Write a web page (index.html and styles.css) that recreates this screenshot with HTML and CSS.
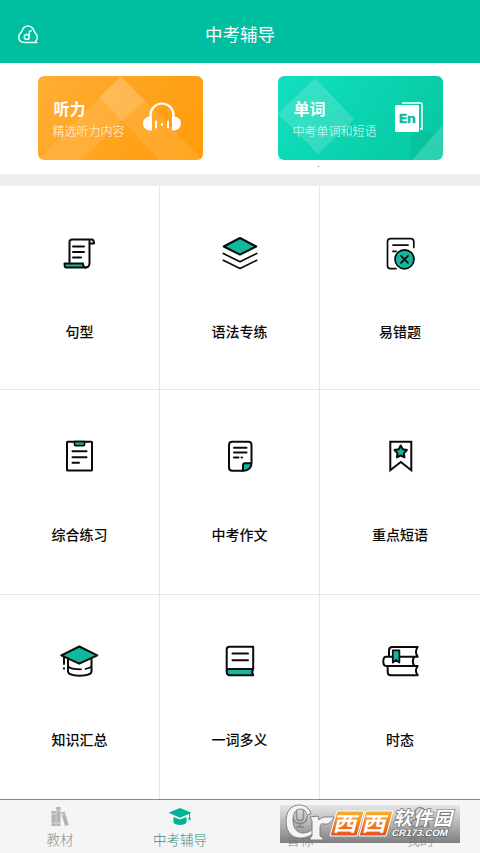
FILE: index.html
```html
<!DOCTYPE html>
<html lang="zh-CN">
<head>
	<meta charset="utf-8">
	<title>中考辅导</title>
	<link rel="stylesheet" href="styles.css">
</head>
<body>
<div class="app">
	<header class="header">
		<svg class="music" viewBox="0 0 22 22">
			<path d="M18.7 17.2c1.2-1.3 1.8-3 1.5-4.6-.3-1.900-1.300-3.100-2.500-4.200C16.500 4.500 14.500 2 11 2S5.600 4.500 4.700 7.800C2.800 9.300 1.700 11 1.800 13.200c.1 3.300 2.600 5.200 5.700 5.200h12.300"/>
			<circle cx="9.800" cy="13" r="2.500"/>
			<path d="M12.300 13V7.600l2-.8"/>
		</svg>
		<h1>中考辅导</h1>
	</header>

	<div class="banners">
		<div class="banner orange">
			<svg class="shapes" viewBox="0 0 165 84">
				<path fill="#fff" opacity=".1" d="M0 84L83 0l82 84h-44L84 44 43 84z"/>
				<path fill="#fff" opacity=".14" d="M83 1l24 24-23 20-23-24z"/>
			</svg>
			<div class="words">
				<h2>听力</h2>
				<p>精选听力内容</p>
			</div>
			<svg class="phones" viewBox="0 0 38 30">
				<path fill="none" stroke="#fff" stroke-width="2.200" d="M7.500 17v-4a11.500 11.500 0 0 1 23 0v4"/>
				<path fill="#fff" d="M9 14.500v14H7a7 7 0 0 1 0-14zM29 14.500v14h2a7 7 0 0 0 0-14z"/>
				<path fill="none" stroke="#fff" stroke-width="2" stroke-linecap="round" d="M13 19.500v6M25 19.500v6M19 22v1"/>
			</svg>
		</div>
		<div class="banner green">
			<svg class="shapes" viewBox="0 0 165 84">
				<path fill="#fff" opacity=".16" d="M37 2l39 41-36 35L0 38z"/>
				<path fill="#fff" opacity=".16" d="M165 49v35h-31z"/>
				<path fill="#008c6c" opacity=".12" d="M133 57h24l-23 27h-1z"/>
			</svg>
			<div class="words">
				<h2>单词</h2>
				<p>中考单词和短语</p>
			</div>
			<svg class="en" viewBox="0 0 28 30">
				<path fill="none" stroke="#fff" stroke-width="1.500" d="M7 1h19q1 0 1 1v25h-2"/>
				<rect x="0" y="3" width="24" height="27" rx="1.500" fill="#fff"/>
				<text x="12" y="21" text-anchor="middle">En</text>
			</svg>
		</div>
		<i class="speck"></i>
	</div>

	<div class="grid">
		<div class="cell">
			<svg class="icon" viewBox="0 0 40 40">
				<path d="M9.500 28V8q0-2.500 2.500-2.500h19.500q2.500 0 2.500 4h-4.500M29.500 5.500V29q0 4.500-4.500 4.500"/>
				<path class="fill" d="M4.500 29.500h18.500q0 4 3 4H6q-1.500 0-1.500-4z"/>
				<path d="M13 12.500h11M13 18h11M13 23.500h8"/>
			</svg>
			<span>句型</span>
		</div>
		<div class="cell">
			<svg class="icon" viewBox="0 0 40 40">
				<path class="fill" d="M20 4l16.300 8.500L20 20.700 3.700 12.500z"/>
				<path class="thin" d="M3.300 19.500L20 27.700l16.700-8.200M3.300 26.300L20 34.500l16.700-8.200"/>
			</svg>
			<span>语法专练</span>
		</div>
		<div class="cell">
			<svg class="icon" viewBox="0 0 40 40">
				<path class="thin" d="M16 34.700h-5.500q-3 0-3-3V7.700q0-3 3-3h20.300q3 0 3 3v5.800M13 11.200h15M13 17.400h3"/>
				<circle class="fill thin" cx="24.500" cy="25.300" r="9.500"/>
				<path class="thin" d="M21 21.800l7 7M28 21.800l-7 7"/>
			</svg>
			<span>易错题</span>
		</div>
		<div class="cell">
			<svg class="icon" viewBox="0 0 40 40">
				<rect x="7" y="4.700" width="25" height="28.800" rx=".5"/>
				<path class="fill thin" d="M14.500 4.700h10v2.800q0 1.200-1.200 1.200h-7.600q-1.200 0-1.200-1.200z"/>
				<path d="M12.500 14.200h14M12.500 20.200h14M12.500 25.700h6.500"/>
			</svg>
			<span>综合练习</span>
		</div>
		<div class="cell">
			<svg class="icon" viewBox="0 0 40 40">
				<path d="M31.500 25.500V8q0-3.300-3.300-3.300H12.300Q9 4.700 9 8v22.500q0 3.300 3.300 3.300H23"/>
				<path class="fill" d="M31.500 26.200c0 4.500-3.500 7.600-8.500 7.600v-5.600q0-2 2-2z"/>
				<path d="M14 10.700h12.500M14 15.600h12.500M14 20.500h4.500M21.500 20.500h.5"/>
			</svg>
			<span>中考作文</span>
		</div>
		<div class="cell">
			<svg class="icon" viewBox="0 0 40 40">
				<path class="sharp" d="M10.300 4.700h21v28.500L20.800 25l-10.500 8.200z"/>
				<path class="fill" d="M20.700 8.500l2 3.800 4.200.8-3 3 .6 4.200-3.800-1.800-3.800 1.800.6-4.200-3-3 4.200-.8z"/>
			</svg>
			<span>重点短语</span>
		</div>
		<div class="cell">
			<svg class="icon" viewBox="0 0 40 40">
				<path d="M8 17v12.500c0 5.500 23.500 5.500 23.500 0V17"/>
				<path class="thin" d="M8.500 24.500c1.500 2.200 6 2.800 12.500 2.800M25.500 26.800q4-.6 5.500-2"/>
				<path class="fill" d="M19.300 4.500l18 8.800-18 8.400-18-8.400z"/>
				<path d="M4 14.500V22M4 26.300v.5"/>
			</svg>
			<span>知识汇总</span>
		</div>
		<div class="cell">
			<svg class="icon" viewBox="0 0 40 40">
				<path d="M6.700 29V7.500q0-2.700 2.700-2.700h23.800v22"/>
				<path class="fill" d="M33.200 27H9q-2.300 0-2.300 2.500 0 3.700 3 3.700h23.500q-2-3 0-6.200z"/>
				<path d="M12.500 11.500H28M12.500 18.300H28"/>
			</svg>
			<span>一词多义</span>
		</div>
		<div class="cell">
			<svg class="icon" viewBox="0 0 40 40">
				<path d="M37.700 5H12q-3 0-3 3.500v6.200M37.700 5q-3.400 4.800 0 9.700M37.700 14.700H6q-2.700 0-2.700 4.600T6 24h31.700M34.300 14.700q-3 4.600 0 9.300M7.700 24v6q0 3.200 3 3.200h27M37.700 24q-3.400 4.600 0 9.200"/>
				<path class="fill thin" d="M12.800 8.300h6.600v12.300l-3.300-2.600-3.300 2.600z"/>
			</svg>
			<span>时态</span>
		</div>
	</div>

	<nav class="tabs">
		<div class="tab">
			<svg viewBox="0 0 24 22">
				<path d="M3.500 5h4.300v15H3.500zM8.300 1h4.200v19H8.300zM13 6.500l3.700-1 4 13.500-3.700 1z"/>
				<path class="gap" d="M3.500 8h4.300M8.300 4.500h4.200M13.700 9l3.700-1M3.500 17h4.300M8.300 17h4.200"/>
			</svg>
			<span>教材</span>
		</div>
		<div class="tab active">
			<svg viewBox="0 0 24 22">
				<path d="M12 2l11.500 4.800L12 11.700.5 6.800zM5.500 11l6.500 2.500 6.500-2.500v5.500c-1.500 3.300-11.500 3.300-13 0zM21 7h1v4.500q1.500 1 .5 2.200h-2q-.8-1.200.5-2.200z"/>
			</svg>
			<span>中考辅导</span>
		</div>
		<div class="tab">
			<svg viewBox="0 0 24 22">
				<path class="line" d="M8.500 5q0-3.500 3.500-3.500T15.500 5v6q0 3.500-3.500 3.500T8.500 11zM5 10q0 7.500 7 7.500t7-7.500M12 17.500V21M8 21h8"/>
			</svg>
			<span>音标</span>
		</div>
		<div class="tab">
			<svg viewBox="0 0 24 22">
				<path class="line" d="M12 1.500a5 5 0 0 1 0 10 5 5 0 0 1 0-10M3 20.500q0-8 9-8t9 8z"/>
			</svg>
			<span>我的</span>
		</div>
		<svg class="watermark" viewBox="0 0 180 38">
			<defs>
				<linearGradient id="bar" x1="0" y1="0" x2="0" y2="1">
					<stop offset="0" stop-color="#777" stop-opacity=".12"/>
					<stop offset="1" stop-color="#6e6e6e" stop-opacity=".88"/>
				</linearGradient>
				<linearGradient id="fire" x1="0" y1="0" x2="0" y2="1">
					<stop offset="0" stop-color="#f9b12a"/>
					<stop offset="1" stop-color="#e8501a"/>
				</linearGradient>
			</defs>
			<rect width="180" height="38" fill="url(#bar)"/>
			<path class="swirl" d="M31 9C29 2 24 0 19 0 10 0 6 8 6 16c0 11 6 17 14 17 6 0 11-2 15-6l-2-3c-4 3-7 4-10 4-6 0-10-5-10-13 0-7 3-11 7-11 4 0 6 2 7 6z"/>
			<path class="swirl" d="M30 12l8-1 1 4c3-4 8-3 15-3-2 5-6 8-10 7-3-1-4 1-4 4v8l3 2v2H30v-2l2-2V16z"/>
			<path class="tile" d="M57 6h27l-7 25H50zM86 6h27l-7 25H79z"/>
			<g transform="skewX(-14)">
				<text class="west" x="59" y="26.500" textLength="24" lengthAdjust="spacingAndGlyphs">西</text>
				<text class="west" x="88" y="26.500" textLength="24" lengthAdjust="spacingAndGlyphs">西</text>
				<text class="soft" x="118" y="20.500" textLength="59">软件园</text>
				<text class="site" x="119" y="31" textLength="56" lengthAdjust="spacingAndGlyphs">CR173.COM</text>
			</g>
		</svg>
	</nav>
</div>
</body>
</html>
```
FILE: styles.css
```css
* {
	box-sizing: border-box;
}
body {
	margin: 0;
	background-color: #fff;
	font-family: Roboto, "Noto Sans CJK SC", sans-serif;
}
h1, h2, p {
	margin: 0;
	font-weight: 400;
}
svg {
	display: block;
}
.app {
	display: flex;
	flex-direction: column;
	width: 480px;
	height: 853px;
	overflow: hidden;
}

/* header */
.header {
	display: grid;
	grid-template-columns: 60px 1fr 60px;
	align-items: center;
	height: 63px;
	padding-top: 7px;
	background-color: #00bea0;
	color: #fff;
}
.header h1 {
	font-size: 17.5px;
	line-height: 24px;
	text-align: center;
}
.music {
	width: 22px;
	height: 22px;
	margin-left: 17px;
	fill: none;
	stroke: #e6fffa;
	stroke-width: 1.5;
	stroke-linecap: round;
	stroke-linejoin: round;
}

/* banners */
.banners {
	display: flex;
	justify-content: space-between;
	position: relative;
	height: 123px;
	padding: 13px 37.5px 0;
	border-bottom: 12px solid #f0eeed;
}
.banner {
	display: flex;
	justify-content: space-between;
	position: relative;
	width: 165px;
	height: 84px;
	border-radius: 6px;
	overflow: hidden;
	color: #fff;
}
.orange {
	background: linear-gradient(120deg, #ffae36, #ffa31d 55%, #ff9c08);
}
.green {
	background: linear-gradient(125deg, #13dfc0, #0bd5b2 45%, #05c79d);
}
.shapes {
	position: absolute;
	inset: 0;
}
.words {
	position: relative;
	padding: 22px 0 0 15px;
}
.words h2 {
	padding-left: 1px;
	font-size: 16px;
	font-weight: 700;
	line-height: 24px;
}
.words p {
	padding-top: 1px;
	font-size: 12px;
	font-weight: 300;
	line-height: 18px;
	white-space: nowrap;
	opacity: .9;
}
.phones {
	position: relative;
	width: 38px;
	height: 30px;
	margin: 26px 22px 0 0;
}
.en {
	position: relative;
	width: 28px;
	height: 30px;
	margin: 26px 20px 0 0;
}
.en text {
	font: 700 13px "DejaVu Sans", sans-serif;
	letter-spacing: -.5px;
	fill: #10bd98;
	stroke: #10bd98;
	stroke-width: .3;
}
.speck {
	position: absolute;
	left: 318px;
	top: 103px;
	width: 1px;
	height: 1px;
	background-color: #4c9c8c;
}

/* menu */
.grid {
	display: grid;
	grid-template-columns: 159px 159px 1fr;
	grid-template-rows: 203px 204px 1fr;
	gap: 1px;
	flex: 1;
	background-color: #e6e6e6;
}
.cell {
	display: flex;
	flex-direction: column;
	align-items: center;
	padding-top: 48px;
	background-color: #fff;
}
.cell span {
	margin-top: 47px;
	color: #080808;
	font-size: 14px;
	font-weight: 500;
	line-height: 22px;
}
.cell:nth-child(n+4) {
	padding-top: 47px;
}
.icon {
	width: 40px;
	height: 40px;
	fill: none;
	stroke: #0b0b0b;
	stroke-width: 2;
	stroke-linecap: round;
	stroke-linejoin: round;
}
.icon .fill {
	fill: #10b99c;
}
.icon .thin {
	stroke-width: 1.7;
}
.icon .sharp {
	stroke-linejoin: miter;
}

/* bottom tabs */
.tabs {
	display: flex;
	position: relative;
	height: 54px;
	border-top: 1px solid #2fb394;
	background-color: #f5f5f5;
}
.tab {
	display: flex;
	flex: 1;
	flex-direction: column;
	align-items: center;
	padding-top: 6px;
	color: #8c8c8c;
	font-size: 13.5px;
	font-weight: 300;
}
.tab span {
	margin-top: 3px;
	line-height: 18px;
}
.tab svg {
	width: 24px;
	height: 22px;
	fill: #b3b3b3;
}
.tab .gap {
	stroke: #e4e4e4;
	stroke-width: .8;
}
.tab .line {
	fill: none;
	stroke: #999;
	stroke-width: 1.5;
}
.tab.active {
	color: #398f87;
}
.tab.active svg {
	fill: #00b294;
}

.watermark {
	position: absolute;
	left: 280px;
	top: 5px;
	width: 180px;
	height: 38px;
	overflow: visible;
}
.swirl {
	fill: #f4f4f4;
	stroke: #777;
	stroke-width: .9;
	stroke-linejoin: round;
}
.tile {
	fill: url(#fire);
	stroke: #fff;
	stroke-width: 1;
}
.west {
	font-size: 20px;
	font-weight: 700;
	fill: #fff;
}
.soft {
	font-size: 19px;
	font-weight: 700;
	fill: #fff;
	stroke: #777;
	stroke-width: 1.5;
	paint-order: stroke;
}
.site {
	font: 700 9.5px "Liberation Sans", sans-serif;
	fill: #fff;
	stroke: #666;
	stroke-width: 1.5;
	paint-order: stroke;
}
```
